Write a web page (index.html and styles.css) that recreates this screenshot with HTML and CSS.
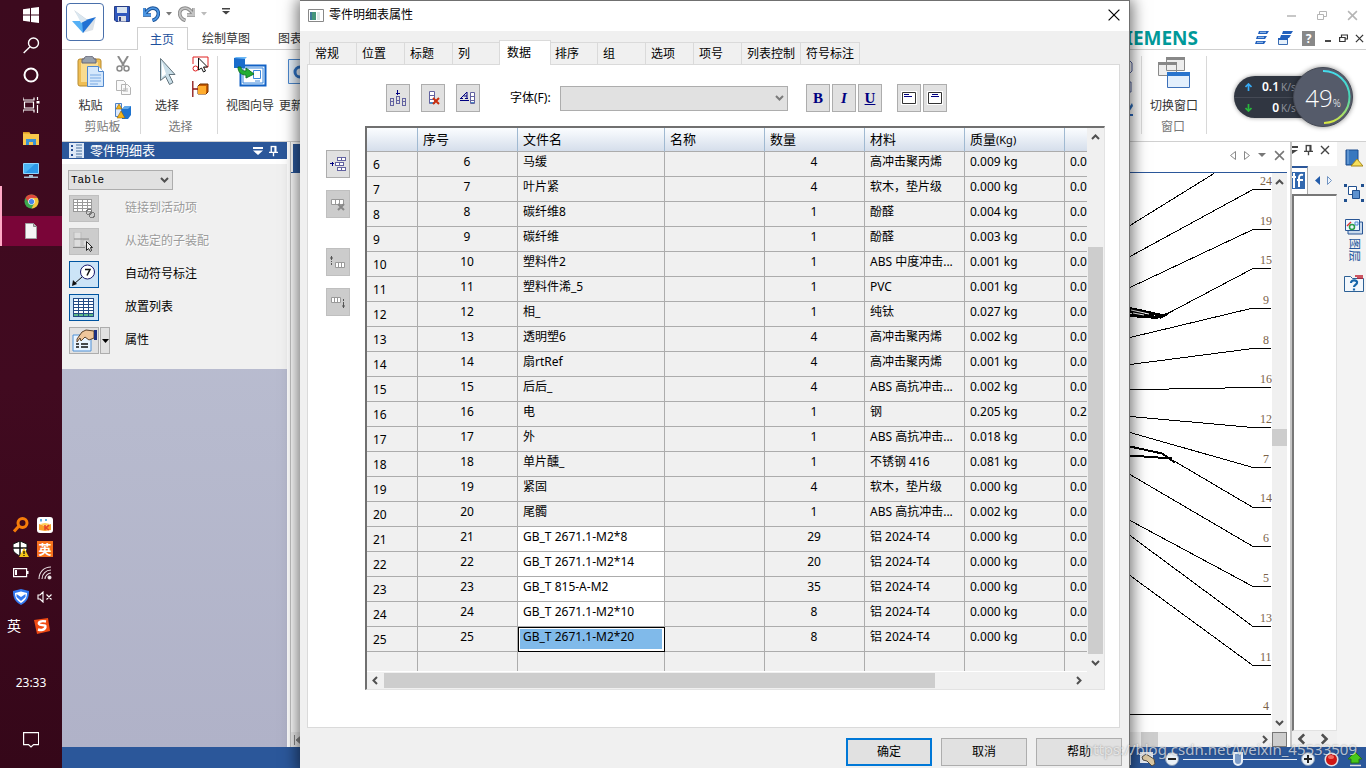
FILE: index.html
```html
<!DOCTYPE html>
<html lang="zh-CN">
<head>
<meta charset="utf-8">
<title>零件明细表属性</title>
<link rel="stylesheet" href="styles.css">
</head>
<body>
<svg class="defs" width="0" height="0" aria-hidden="true">
  <symbol id="up" viewBox="0 0 9 6"><path d="M1 5 4.500 1.500 8 5" fill="none" stroke="#505050" stroke-width="2"/></symbol>
  <symbol id="down" viewBox="0 0 9 6"><path d="M1 1 4.500 4.500 8 1" fill="none" stroke="#505050" stroke-width="2"/></symbol>
  <symbol id="left" viewBox="0 0 6 9"><path d="M5 1 1.500 4.500 5 8" fill="none" stroke="#505050" stroke-width="2"/></symbol>
  <symbol id="right" viewBox="0 0 6 9"><path d="M1 1 4.500 4.500 1 8" fill="none" stroke="#505050" stroke-width="2"/></symbol>
  <symbol id="pin" viewBox="0 0 10 12"><path d="M2.500 7V1h5v6M0 7.500h10M5 8v4" fill="none" stroke="currentColor" stroke-width="1.500"/><path d="M6 1h2v6H6z" fill="currentColor"/></symbol>
  <symbol id="close" viewBox="0 0 10 10"><path d="m1 1 8 8M9 1 1 9" fill="none" stroke="currentColor" stroke-width="1.400"/></symbol>
</svg>

<nav class="taskbar">
  <div class="launch">
    <button class="task" aria-label="开始"><svg width="16" height="16" viewBox="0 0 16 16" fill="#fff"><path d="M0 2.300 7 1.300V7.600H0zM8 1.100 16 0v7.600H8zM0 8.400h7v6.300L0 13.700zM8 8.400h8V16l-8-1.100z"/></svg></button>
    <button class="task" aria-label="搜索"><svg width="17" height="17" viewBox="0 0 17 17" fill="none" stroke="#fff" stroke-width="1.400"><circle cx="10.500" cy="6" r="5"/><path d="M7 9.700.7 16"/></svg></button>
    <button class="task" aria-label="Cortana"><svg width="16" height="16" viewBox="0 0 16 16" fill="none" stroke="#fff" stroke-width="2"><circle cx="8" cy="8" r="6.500"/></svg></button>
    <button class="task" aria-label="任务视图"><svg width="17" height="16" viewBox="0 0 17 16" fill="none" stroke="#fff" stroke-width="1.200"><path d="M0 .5V3h11V.5M0 15.500V13h11v2.500M1.500 5h9v6h-9zM14.500 0v3M14.500 8v8"/><path d="M13.500 4h3v2.500h-3z" fill="#fff" stroke="none"/></svg></button>
    <button class="task pinned" aria-label="文件资源管理器"><svg width="17" height="15" viewBox="0 0 17 15"><path d="M0 1h6l1.500 2H16v11H0z" fill="#f8c84c"/><path d="M0 1h6l1 1.500H0z" fill="#dd9b22"/><path d="M3 14V8h10v6h-3v-3H6v3z" fill="#3a93d5"/></svg></button>
    <button class="task pinned" aria-label="此电脑"><svg width="17" height="16" viewBox="0 0 17 16"><path d="M.5.500h15v10H.5z" fill="#4bb5f5" stroke="#8ed5ff"/><path d="M2 10 12 1h3v9z" fill="#2d98e8"/><path d="M6 12h4v1.500h5V15H1v-1.500h5z" fill="#a8bed0"/></svg></button>
    <button class="task running" aria-label="Chrome"><svg width="15" height="15" viewBox="0 0 16 16"><circle cx="8" cy="8" r="7.500" fill="#3da74e"/><path d="M1.500 4.200A7.500 7.500 0 0 1 14.500 4.300H8L5 9z" fill="#df4a3d"/><path d="M14.500 4.300A7.500 7.500 0 0 1 8 15.500L11 9.500 9 4.300z" fill="#f5c43b"/><circle cx="8" cy="8" r="3.500" fill="#fff"/><circle cx="8" cy="8" r="2.800" fill="#4886eb"/></svg></button>
    <button class="task running active" aria-label="文档"><svg width="12" height="16" viewBox="0 0 12 16"><path d="M.5.500h8l3 3v12H.5z" fill="#f5f5f5" stroke="#a0a0a0"/><path d="M8.500.500v3h3" fill="#bbb" stroke="#888"/></svg></button>
  </div>
  <div class="tray">
    <svg width="16" height="16" viewBox="0 0 16 16" fill="none" stroke="#f57c0a"><circle cx="9.500" cy="6" r="4.500" stroke-width="3"/><path d="m6 9-5 5.500" stroke-width="3"/></svg>
    <svg width="16" height="16" viewBox="0 0 16 16"><rect width="16" height="16" rx="3" fill="#fff"/><path d="m2 7 6 2 6-2v6l-6 1-6-1z" fill="#f8a02a"/><path d="M3 7l5-1 5 1-5 2z" fill="#ffcf57"/><path d="M8 8v5M12 8 9 11l3 2" stroke="#e6432c" stroke-width="1.500" fill="none"/><path d="M4 4.500V2M8 3h2" stroke="#2c97d8" stroke-width="1.500"/></svg>
    <svg width="16" height="16" viewBox="0 0 16 16"><path d="M7 0 14 3v5c0 3-3 5-7 7C3 13 0 11 0 8V3z" fill="#fff" stroke="#111"/><path d="M7 0v15M0 7h14" stroke="#111" stroke-width="1.500"/><path d="m11 7 5 9H6z" fill="#f5c518"/><path d="M11 10v3M11 14v1" stroke="#111" stroke-width="1.300"/></svg>
    <span class="ime">英</span>
    <svg width="16" height="10" viewBox="0 0 16 10"><path d="M.6.600h13v8H.6z" fill="none" stroke="#fff" stroke-width="1.200"/><path d="M2 2h2v5H2zM14 3h1.500v3H14z" fill="#fff"/></svg>
    <svg width="14" height="14" viewBox="0 0 14 14" fill="none" stroke="#e9dfe3" stroke-width="1.100"><path d="M1 13C1 6 6 1 13 1M4 13c0-5 4-9 9-9M7 13c0-3 3-6 6-6"/><circle cx="11.500" cy="11.500" r="1.500" fill="#fff"/></svg>
    <svg width="16" height="16" viewBox="0 0 16 16"><path d="M8 0 16 2c0 7-2 11-8 14C2 13 0 9 0 2z" fill="#3278ef"/><path d="M8 2.500 14 4c0 5-2 7.500-6 10-4-2.500-6-5-6-10z" fill="#fff"/><path d="m3.500 5 4.500 3 4.500-3v3L8 12 3.500 8z" fill="#3278ef"/></svg>
    <svg width="16" height="12" viewBox="0 0 16 12" fill="none" stroke="#fff" stroke-width="1.100"><path d="M1 4h2l3-3v10L3 8H1zM9.500 3.500l5 5M14.500 3.500l-5 5"/></svg>
    <span class="lang">英</span>
    <svg class="sogou" width="16" height="16" viewBox="0 0 16 16"><path d="M0 2 14 0l2 13-13 3z" fill="#f04b14"/><path d="M12 3.500C7 2.500 4 4 5 6s7 0 6.500 3C11 12 7 12.500 4 11.500" fill="none" stroke="#fff" stroke-width="2.400"/></svg>
  </div>
  <time class="clock">23:33</time>
  <button class="notify" aria-label="通知"><svg width="16" height="16" viewBox="0 0 16 16"><path d="M.6.600h15v12h-5L8 15l-2.500-2.400H.6z" fill="none" stroke="#fff" stroke-width="1.200"/></svg></button>
</nav>

<div class="app">
  <header class="top">
    <div class="logo-cell">
      <button class="logo" aria-label="应用程序"><svg width="26" height="26" viewBox="0 0 26 26"><path d="M2 1 17 12 14 20z" fill="#c9d2da"/><path d="M24 8 10 24 21 21z" fill="#dce2e8"/><path d="M0 12h12l-1 12z" fill="#55b0f5"/><path d="M10 12 24 8 11 24z" fill="#2171d3"/><path d="m3 2 12 9-6 3z" fill="#dbe7f0"/></svg></button>
    </div>
    <div class="top-main">
      <div class="quick">
        <button aria-label="保存"><svg width="16" height="16" viewBox="0 0 16 16"><path d="M.5.500h15v15H2L.5 14z" fill="#2f57bd" stroke="#273d86"/><path d="M3 1h10v6H3z" fill="#d9e4ef"/><path d="M4 10h8v5.500H4z" fill="#d9dce4"/><path d="M5 11h2v4H5z" fill="#31417e"/></svg></button>
        <button class="after-save" aria-label="撤消"><svg width="17" height="16" viewBox="0 0 17 16"><path d="M1 2v7h7M1.500 8.500C5 3 9 1.500 12 2.500c4 1.500 4 6 2 9-1 1.500-3 2.500-4.500 3" fill="none" stroke="#1b5296" stroke-width="3.600"/><path d="M1 2v7h7M1.500 8.500C5 3 9 1.500 12 2.500c4 1.500 4 6 2 9-1 1.500-3 2.500-4.500 3" fill="none" stroke="#4d97e4" stroke-width="1.800"/></svg></button>
        <svg class="drop" width="6" height="4" viewBox="0 0 6 4"><path d="M0 0h6L3 3.500z" fill="#777"/></svg>
        <button aria-label="重做"><svg width="17" height="16" viewBox="0 0 17 16"><path d="M16 2v7H9M15.500 8.500C12 3 8 1.500 5 2.500c-4 1.500-4 6-2 9 1 1.500 3 2.500 4.500 3" fill="none" stroke="#8a8a8a" stroke-width="3.600"/><path d="M16 2v7H9M15.500 8.500C12 3 8 1.500 5 2.500c-4 1.500-4 6-2 9 1 1.500 3 2.500 4.500 3" fill="none" stroke="#c4c4c4" stroke-width="1.800"/></svg></button>
        <svg class="drop" width="6" height="4" viewBox="0 0 6 4"><path d="M0 0h6L3 3.500z" fill="#bbb"/></svg>
        <svg class="custom" width="8" height="7" viewBox="0 0 8 7"><path d="M0 0h8v1.500H0zM0 3h8L4 6.500z" fill="#444"/></svg>
        <div class="win-controls">
          <svg width="10" height="10" viewBox="0 0 10 10"><path d="M0 6h9" stroke="#b5b5b5" stroke-width="1.500"/></svg>
          <svg width="10" height="11" viewBox="0 0 10 11" fill="none" stroke="#b5b5b5"><path d="M2.500 4V1.500h7v5H7M.5 4.500h6v5h-6z"/></svg>
          <svg width="11" height="11" viewBox="0 0 10 10" color="#b5b5b5"><use href="#close"/></svg>
        </div>
      </div>
      <div class="tabs-row">
        <a class="rtab current" href="#home">主页</a>
        <a class="rtab" href="#sketch">绘制草图</a>
        <a class="rtab" href="#chart">图表</a>
        <div class="brand-row">
          <span class="brand">SIEMENS</span>
          <svg width="14" height="14" viewBox="0 0 14 14"><path d="M4 0h10l-2 3H3zM2 5h10l-2 3H1zM1 10h10l-2 3H0z" fill="#2361bd"/><path d="M5 1.300h6M3 6.300h6M2 11.300h6" stroke="#a8cbf0"/></svg>
          <svg width="15" height="15" viewBox="0 0 15 15"><path d="M5 0h10l-2 3H4zM3 4h10l-2 3H2z" fill="#2361bd"/><path d="M.5 7.500h9v6h-9z" fill="#e5f0fb" stroke="#3b6db3"/><path d="M0 7h10v2H0z" fill="#2361bd"/></svg>
          <span class="help">?</span>
          <svg class="mdi" width="8" height="10" viewBox="0 0 8 10"><path d="M1 8h6" stroke="#333" stroke-width="1.800"/></svg>
          <svg class="mdi" width="9" height="9" viewBox="0 0 9 9" fill="none" stroke="#333" stroke-width="1.200"><path d="M2.500 3V1h6v4H6.500M.6 3.500h5.500v4H.6z"/></svg>
          <svg class="mdi" width="9" height="9" viewBox="0 0 10 10" color="#333"><use href="#close"/></svg>
        </div>
      </div>
    </div>
  </header>

  <section class="ribbon">
    <div class="group clip">
      <div class="tools">
        <button class="big"><svg width="28" height="32" viewBox="0 0 28 32"><rect x="1" y="3" width="23" height="27" rx="2" fill="#efbe55" stroke="#b78a2e"/><path d="M4 6h17v20H4z" fill="#f9dc91"/><path d="M7 3c0-2 2-3 5-3s5 1 5 3h2v4H5V3z" fill="#98a1ad" stroke="#667"/><path d="M10.500 10.500h11l5 5v15h-16z" fill="#d5e8fc" stroke="#5188cd"/><path d="M21.500 10.500v5h5" fill="#fff" stroke="#5188cd"/><path d="M13 19h11M13 22h11M13 25h11M13 28h8" stroke="#78a9e3"/></svg><span>粘贴</span></button>
        <div class="mini">
          <svg width="14" height="16" viewBox="0 0 14 16" fill="none" stroke="#8b8b8b"><path d="m2 0 6 10M12 0 6 10" stroke-width="2"/><circle cx="3.500" cy="12.500" r="2.500" stroke-width="1.500"/><circle cx="10.500" cy="12.500" r="2.500" stroke-width="1.500"/></svg>
          <svg width="15" height="15" viewBox="0 0 15 15" fill="#fafafa" stroke="#b4b4b4"><path d="M.5.500h7l2 2v8h-9zM5.500 4.500h6l3 3v7h-9z"/><path d="M7 9h5M7 11h5"/></svg>
          <svg width="17" height="16" viewBox="0 0 17 16"><path d="M.5.500h6v13h-6z" fill="#dfeafa" stroke="#4b81c8"/><path d="m7 6 3-3h6v9l-3 4H7z" fill="#1e73cf"/><path d="m7 6 3-3h6l-3 3z" fill="#62a9eb"/><path d="m4 1 3 5H1zM6 8l4 7H2z" fill="#f3b51b" stroke="#805400" stroke-width=".5"/></svg>
        </div>
      </div>
      <h2>剪贴板</h2>
    </div>
    <div class="group select-group">
      <div class="tools">
        <button class="big"><svg width="28" height="32" viewBox="0 0 28 32"><path d="M7.500 2.500v22l5-4 4 8 3.500-2-4-8h6z" fill="#c9dee8" stroke="#63747d"/><path d="M9 6v15l4-3z" fill="#fff"/></svg><span>选择</span></button>
        <div class="mini two">
          <svg width="17" height="17" viewBox="0 0 17 17"><path d="M1 8V1h15v10h-4" fill="none" stroke="#e02020"/><circle cx="3.500" cy="12.500" r="2.500" fill="none" stroke="#e02020"/><path d="M6.500 2v12l3-2 2 4 2-1-2-4h4z" fill="#fff" stroke="#111"/></svg>
          <svg width="17" height="16" viewBox="0 0 17 16"><path d="M.8 0v16M1 8h6" stroke="#8b1313" stroke-width="1.300"/><path d="m6 5 2-2h8v8l-2 2H6z" fill="#c95d00" stroke="#713000"/><path d="M6 5h8v8H6z" fill="#ffad2e"/></svg>
        </div>
      </div>
      <h2>选择</h2>
    </div>
    <div class="group views">
      <div class="tools">
        <button class="big"><svg width="34" height="32" viewBox="0 0 34 32"><path d="M7.500 9.500h25v20h-25z" fill="#e7f4ff" stroke="#1262c6" stroke-width="2"/><path d="M10 12h20v15H10z" fill="#fff" stroke="#3c87dc"/><path d="M20.500 14.500h7v8h-7zM22 25h5" fill="none" stroke="#3c87dc"/><path d="M1 2h11v10H1z" fill="#1a6dcc"/><path d="m1 2 2-1h11l-2 2z" fill="#6cb8f6"/><path d="M5 11c0 5 3 8 8 8v3l8-4-8-6v3c-4 0-5-2-5-4z" fill="#23ae31" stroke="#15752a"/></svg><span>视图向导</span></button>
        <button class="big update"><svg width="34" height="32" viewBox="0 0 34 32"><path d="M1.500 3.500h31v24h-31z" fill="#e7f2fd" stroke="#4b88ce"/><circle cx="13" cy="16" r="5" fill="none" stroke="#2d72c5" stroke-width="3"/></svg><span>更新视图</span></button>
      </div>
    </div>
    <div class="group window-group">
      <div class="tools">
        <div class="mini partial"><svg width="10" height="70" viewBox="0 0 10 70"><path d="M1 4h5l3 3v8l-3 3H1zM1 26h7v10H1z" fill="none" stroke="#4f5e9b"/><path d="M9 47 3 56l1 3 6-9z" fill="#2c6dbb"/><path d="M0 59h10" stroke="#2868bf" stroke-width="2"/></svg></div>
        <button class="big"><svg width="34" height="32" viewBox="0 0 34 32"><path d="M9.500 1.500h18v13h-18zM1.500 6.500h18v13h-18z" fill="#eee" stroke="#8a8a8a"/><path d="M9 1h19v3H9zM1 6h19v3H1z" fill="#888"/><path d="M10.500 16.500h22v15h-22z" fill="#e3effc" stroke="#3c70b9"/><path d="M10 16h23v4H10z" fill="#2974cd"/></svg><span>切换窗口</span></button>
      </div>
      <h2>窗口</h2>
    </div>
  </section>

  <main class="work">
    <aside class="side">
      <header class="side-head">
        <svg width="15" height="15" viewBox="0 0 15 15"><path d="M0 0h15v15H0z" fill="#dfe9f7"/><path d="M7 2h6M7 5h6M7 8h6M7 11h6M7 14h6" stroke="#47709f"/><path d="M2 2h2v2H2zM2 6h2v2H2zM2 11h2v2H2z" fill="#274f93"/></svg>
        <h1>零件明细表</h1>
        <svg class="menu" width="10" height="8" viewBox="0 0 10 8"><path d="M0 0h10v2H0zM0 3.500h10L5 8z" fill="#fff"/></svg>
        <svg width="9" height="12" viewBox="0 0 10 12" color="#fff"><use href="#pin"/></svg>
      </header>
      <div class="side-body">
        <label class="combo style-combo"><select aria-label="样式"><option>Table</option></select><svg width="9" height="6"><use href="#down"/></svg></label>
        <div class="option off"><button disabled aria-labelledby="o1"><svg width="22" height="20" viewBox="0 0 22 20" shape-rendering="crispEdges"><path d="M.5.500h18v12H.5zM0 3.500h19M0 6.500h19M0 9.500h19M4.500 0v12M9.500 0v12M14.500 0v12" fill="#fff" stroke="#999"/><circle cx="16" cy="13" r="2.500" fill="none" stroke="#777"/><circle cx="19" cy="16" r="2.500" fill="none" stroke="#777"/></svg></button><span id="o1">链接到活动项</span></div>
        <div class="option off"><button disabled aria-labelledby="o2"><svg width="22" height="20" viewBox="0 0 22 20"><path d="M1 0h7v15H1zM10 8h6v6h-6z" fill="#ddd" stroke="#bbb"/><path d="M0 15.500h12M1 7h15" stroke="#888"/><path d="M13.500 9.500v9l2-2 2 3 1-1-1-3h2z" fill="#eee" stroke="#222"/></svg></button><span id="o2">从选定的子装配</span></div>
        <div class="option on"><button aria-labelledby="o3"><svg width="24" height="22" viewBox="0 0 24 22"><circle cx="15.500" cy="8" r="7" fill="#fff" stroke="#16166b"/><path d="M13 5.500h5l-3 6" fill="none" stroke="#111" stroke-width="1.500"/><path d="m10 13-8 7" stroke="#111"/><path d="m0 22 1-6 4 4z" fill="#111"/></svg></button><span id="o3">自动符号标注</span></div>
        <div class="option on"><button aria-labelledby="o4"><svg width="22" height="20" viewBox="0 0 22 20" shape-rendering="crispEdges"><path d="M1 1h20v18H1z" fill="#fff"/><path d="M1 16h20v3H1z" fill="#5cb987"/><path d="M.5.500h20v18H.5zM.5 3.500h20M.5 6.500h20M.5 9.500h20M.5 12.500h20M.5 15.500h20M5.500.500v18M10.500.500v18M15.500.500v18" fill="none" stroke="#224b85"/></svg></button><span id="o4">放置列表</span></div>
        <div class="option"><button aria-labelledby="o5"><svg width="25" height="23" viewBox="0 0 25 23"><path d="M1 6h18v16H1z" fill="#e9f4ff" stroke="#4e91d6"/><path d="M4 15h3M4 18h3M9 15h7M9 18h7" stroke="#111" stroke-width="1.500"/><path d="m5 10 5-7 4-2 8 1v7l-5 2-4-3-4 4-1-3-3 4z" fill="#efc69b" stroke="#5c432c"/><path d="M22 1h3v10h-3z" fill="#1b2f81"/></svg></button><button class="split" aria-label="更多属性"><svg width="7" height="4"><path d="M0 0h7L3.500 4z"/></svg></button><span id="o5">属性</span></div>
      </div>
    </aside>

    <section class="document">
      <div class="doc-tabs"><span class="doc-tab"></span>
        <div class="doc-nav"><svg width="6" height="9"><path d="M5.500.500v8L.5 4.500z" fill="#fff" stroke="#888"/></svg><svg width="6" height="9"><path d="M.5.500v8l5-4z" fill="#fff" stroke="#888"/></svg><svg width="8" height="5"><path d="M0 0h8L4 4z" fill="#777"/></svg><svg width="11" height="11" viewBox="0 0 10 10" color="#777"><use href="#close"/></svg></div>
      </div>
      <div class="canvas-row">
        <svg class="drawing" viewBox="1130 173 142 559" preserveAspectRatio="xMaxYMin meet">
          <g fill="none" stroke="#000" shape-rendering="crispEdges" transform="translate(0 .5)">
            <path d="m1130 225 84-52M1130 256l123-67h18M1130 287l123-58h18M1162 316l91-48h18M1130 337l121-29h20M1130 364l123-16h18M1130 389h39M1169 388h56M1225 387h46M1130 416l123 11h18M1130 432l123 35h18M1175 461l78 46h18M1130 474l123 72h18M1130 520l123 66h18M1130 535l123 91h18M1130 575l123 90h18M1130 714h141"/>
            <path stroke-width="3" d="m1130 308 32 7-6 2-26-6M1130 315l28 2M1160 317l8-4"/>
            <path stroke-width="2" d="m1130 446 32 7 13 9M1130 455l42 3"/>
          </g>
          <path d="m1131 310 18 4M1133 313l11 2" stroke="#fff"/>
          <g class="marks">
            <text x="1260" y="185">24</text><text x="1260" y="225">19</text><text x="1260" y="264">15</text><text x="1263" y="304">9</text><text x="1263" y="344">8</text><text x="1260" y="383">16</text><text x="1260" y="423">12</text><text x="1263" y="463">7</text><text x="1260" y="502">14</text><text x="1263" y="542">6</text><text x="1263" y="582">5</text><text x="1260" y="622">13</text><text x="1260" y="661">11</text><text x="1263" y="710">4</text>
          </g>
        </svg>
        <div class="doc-vscroll"><svg width="9" height="6"><use href="#up"/></svg><i></i><svg width="9" height="6"><use href="#down"/></svg></div>
      </div>
      <div class="doc-hscroll"><svg class="first" width="8" height="10" viewBox="0 0 8 10"><path d="M.5 0v10M8 0v10L2 5z" fill="#888" stroke="#888"/></svg><i></i><svg width="6" height="9"><use href="#right"/></svg><b></b></div>
    </section>

    <aside class="library">
      <div class="lib-head"><svg width="8" height="8" viewBox="0 0 8 8"><path d="M0 0h6v2H0zM0 4h6L0 8z" fill="#444"/></svg><svg width="9" height="12" viewBox="0 0 10 12" color="#444"><use href="#pin"/></svg><svg width="10" height="10" color="#444"><use href="#close"/></svg></div>
      <div class="lib-tabs"><span><svg width="13" height="17" viewBox="0 0 13 17"><path d="M0 0h13v17H0z" fill="#3268ae"/><path d="M2 1v15M0 5h4M11 3c-3-1-4 1-4 3v9M5 8h6" fill="none" stroke="#fff" stroke-width="2"/></svg></span><svg width="5" height="9"><path d="M5 0v9L0 4.500z" fill="#235caa"/></svg><svg width="5" height="9"><path d="M.5.500v8l4-4z" fill="#eef4fc" stroke="#7194c2"/></svg></div>
      <div class="lib-page"></div>
      <div class="lib-scroll"><svg width="9" height="12" viewBox="0 0 6 9"><use href="#left"/></svg><svg width="9" height="12" viewBox="0 0 6 9"><use href="#right"/></svg></div>
    </aside>
    <aside class="strip">
      <svg width="18" height="18" viewBox="0 0 18 18"><path d="M1 1h12v15H1z" fill="#3978bf" stroke="#1d4c8e"/><path d="M3 1v14" stroke="#84b1e2"/><path d="m12 10 6 7H6z" fill="#f7df5c" stroke="#a58718"/></svg>
      <svg width="20" height="18" viewBox="0 0 20 18"><path d="M0 0h3v3H0zM17 0h3v3h-3zM0 15h3v3H0zM17 15h3v3h-3z" fill="#20508f"/><path d="M4.500 2.500h8v8h-8z" fill="#fff" stroke="#20508f"/><path d="M8.500 6.500h7v8h-7z" fill="#5c91cf" stroke="#20508f"/></svg>
      <svg width="18" height="16" viewBox="0 0 18 16"><path d="M3 3h14.500v12H3z" fill="#c9daed" stroke="#285594"/><path d="M.5.500h14v11H.5z" fill="#edf6ff" stroke="#285594"/><path d="m2 7 4-4" fill="none" stroke="#d33" stroke-width="1.500"/><path d="M10 3h3v3h-3z" fill="none" stroke="#4c8ad0"/><circle cx="7" cy="8" r="2.500" fill="none" stroke="#2a9d46" stroke-width="1.500"/></svg>
      <span class="rotated">图层</span>
      <svg width="20" height="18" viewBox="0 0 20 18"><path d="M.5 16.500V1.500h6l2 2h11v13z" fill="#f2f7fc" stroke="#2c6095"/><path d="M11 1h8M13 3h6" stroke="#c02030" stroke-width="1.500"/><path d="M7 8c0-4 7-3 6 0-.500 2-3 2-3 4M10 13.500v2" fill="none" stroke="#1665a9" stroke-width="2.200"/></svg>
    </aside>
  </main>

  <footer class="status">
    <svg width="12" height="12" viewBox="0 0 12 12"><path d="M0 0h12v12H0z" fill="#e9effb"/><path d="m2 2 8 8M10 2l-8 8" stroke="#214a9a" stroke-width="1.500" stroke-dasharray="3 2"/></svg>
    <svg width="16" height="14" viewBox="0 0 16 14"><path d="M0 0h13v11H0z" fill="#e7ecf4"/><path d="m2 5 4-3 8 5 1 5-3 2-5-5-4-1z" fill="#d9c6a1" stroke="#514a40"/></svg>
    <button class="round" aria-label="缩小"><svg width="14" height="14" viewBox="0 0 14 14"><circle cx="7" cy="7" r="6.500" fill="#e9f0f6" stroke="#8297b2"/><path d="M3 7h8" stroke="#222" stroke-width="2"/></svg></button>
    <input class="zoom" type="range" min="0" max="100" value="48" aria-label="缩放">
    <button class="round" aria-label="放大"><svg width="14" height="14" viewBox="0 0 14 14"><circle cx="7" cy="7" r="6.500" fill="#e9f0f6" stroke="#8297b2"/><path d="M3 7h8M7 3v8" stroke="#222" stroke-width="2"/></svg></button>
    <svg width="15" height="15" viewBox="0 0 15 15"><circle cx="7.500" cy="7.500" r="7" fill="#e1e3e8"/><circle cx="7.500" cy="7.500" r="5.500" fill="#cf1715"/><ellipse cx="7" cy="5" rx="3" ry="2" fill="#f26a5f"/></svg>
    <svg width="14" height="15" viewBox="0 0 14 15"><path d="m7 0 7 7h-3v4H3V7H0z" fill="#46c81a" stroke="#297610"/><path d="M2 13.500h11" stroke="#ddd" stroke-width="1.500"/></svg>
  </footer>
</div>

<div class="meter">
  <div class="rates"><p><svg width="7" height="8"><path d="M3.500 8V1M.5 4l3-3 3 3" fill="none" stroke="#37aaf5" stroke-width="1.700"/></svg><b>0.1</b><small>K/s</small></p><p><svg width="7" height="8"><path d="M3.500 0v7M.5 4l3 3 3-3" fill="none" stroke="#28b83d" stroke-width="1.700"/></svg><b>0</b><small>K/s</small></p></div>
  <div class="dial"><svg width="60" height="60" viewBox="0 0 60 60"><defs><linearGradient id="arc" x2="0" y2="1"><stop stop-color="#45dcec"/><stop offset=".5" stop-color="#48d6b4"/><stop offset="1" stop-color="#d7e642"/></linearGradient></defs><path d="M30 4a26 26 0 0 1 1 52" fill="none" stroke="url(#arc)" stroke-width="2"/></svg><span>49<small>%</small></span></div>
</div>

<section class="dialog" role="dialog" aria-labelledby="dlg-title">
  <header class="dlg-head">
    <svg width="16" height="13" viewBox="0 0 16 13"><path d="M.5.500h15v12H.5z" fill="#fff" stroke="#888"/><path d="M2 3h6v8H2z" fill="#43957a"/><path d="M2 3h2v8H2z" fill="#3c7898"/><path d="M9 3h3v8H9z" fill="#dce7e7"/></svg>
    <h1 id="dlg-title">零件明细表属性</h1>
    <button class="dlg-close" aria-label="关闭"><svg width="12" height="12" viewBox="0 0 10 10"><path d="m.5.500 9 9M9.500.500l-9 9" stroke="#000"/></svg></button>
  </header>
  <div class="dlg-tabs" role="tablist">
    <button role="tab">常规</button><button role="tab">位置</button><button role="tab">标题</button><button role="tab">列</button><button role="tab" class="selected" aria-selected="true">数据</button><button role="tab">排序</button><button role="tab">组</button><button role="tab">选项</button><button role="tab">项号</button><button role="tab" class="wide">列表控制</button><button role="tab" class="wide">符号标注</button>
  </div>
  <div class="pane">
    <div class="toolbar">
      <button class="tool" aria-label="插入列"><svg width="16" height="16" viewBox="0 0 16 16" fill="none" stroke="#6262a0" shape-rendering="crispEdges"><path d="M7.500 0v5M5.500 3.500h4" stroke="#000080"/><path d="M.5 8.500h3v7h-3zM6.500 6.500h3v7h-3zM12.500 8.500h3v7h-3zM0 11.500h4M6 10.500h4M12 11.500h4"/></svg></button>
      <button class="tool" aria-label="删除列"><svg width="14" height="16" viewBox="0 0 14 16"><path d="M3.500 1.500h5v12h-5zM3 5.500h6M3 9.500h6" fill="#fff" stroke="#6262a0"/><path d="M4 12h5v2H4z" fill="#4e8ac5"/><path d="m7 8 6 6M13 8l-6 6" stroke="#cb2f0d" stroke-width="2"/></svg></button>
      <button class="tool" aria-label="文本格式"><svg width="16" height="16" viewBox="0 0 16 16"><path d="m1 8 6-6v6M3.500 6H7M0 8.500h3M5 8.500h3M0 10.500h9" fill="none" stroke="#000080"/><path d="M10.500 2.500h4v11h-4zM10 6.500h5M10 10.500h5" fill="#fff" stroke="#6262a0"/><path d="M11 12h3v1h-3z" fill="#4e8ac5"/></svg></button>
      <label class="font-label" for="font">字体(F):</label>
      <div class="combo font-combo"><select id="font"><option></option></select><svg width="9" height="6"><use href="#down"/></svg></div>
      <div class="format"><button class="tool letter">B</button><button class="tool letter italic">I</button><button class="tool letter under">U</button></div>
      <div class="format"><button class="tool" aria-label="左对齐"><svg width="16" height="14" viewBox="0 0 16 14"><path d="M0 0h16v14H0z" fill="#fff"/><path d="M1.500 1.500h13v11h-13z" fill="none" stroke="#333"/><path d="M3 3.500h5M3 5.500h8" stroke="#000080"/></svg></button><button class="tool" aria-label="居中"><svg width="16" height="14" viewBox="0 0 16 14"><path d="M0 0h16v14H0z" fill="#fff"/><path d="M1.500 1.500h13v11h-13z" fill="none" stroke="#333"/><path d="M5 3.500h6M4 5.500h8" stroke="#000080"/></svg></button></div>
    </div>
    <div class="editor">
      <div class="row-tools">
        <button class="tool" aria-label="插入行"><svg width="16" height="16" viewBox="0 0 16 16" fill="#fff" stroke="#6262a0" shape-rendering="crispEdges"><path d="M0 7.500h4M2.500 5.500v4" stroke="#000080"/><path d="M7.500 1.500h8v3h-8zM5.500 6.500h8v3h-8zM7.500 11.500h8v3h-8zM11.500 1v4M9.500 6v4M11.500 11v4"/></svg></button>
        <button class="tool" disabled aria-label="删除行"><svg width="16" height="16" viewBox="0 0 16 16"><path d="M1.500 3.500h12v5h-12zM5.500 3v6M9.500 3v6" fill="#fff" stroke="#999"/><path d="m8 8 6 6M14 8l-6 6" stroke="#888" stroke-width="2"/></svg></button>
        <button class="tool second" disabled aria-label="上移"><svg width="16" height="16" viewBox="0 0 16 16"><path d="M1.500 2v6M0 4h3M1.500 9v2" stroke="#555" stroke-dasharray="4 1"/><path d="M5.500 8.500h9v5h-9zM8.500 8v6M11.500 8v6" fill="#fff" stroke="#999"/></svg></button>
        <button class="tool" disabled aria-label="下移"><svg width="16" height="16" viewBox="0 0 16 16"><path d="M1.500 3.500h9v5h-9zM4.500 3v6M7.500 3v6" fill="#fff" stroke="#999"/><path d="M13.500 5v2M13.500 8v6M12 12h3" stroke="#555"/></svg></button>
      </div>
      <div class="frame">
        <div class="view">
        <table>
          <colgroup><col class="c0"><col class="c1"><col class="c2"><col class="c1"><col class="c1"><col class="c1"><col class="c1"><col class="c1"></colgroup>
          <thead><tr><th></th><th>序号</th><th>文件名</th><th>名称</th><th>数量</th><th>材料</th><th>质量<small>(Kg)</small></th><th></th></tr></thead>
          <tbody>
            <tr><th>6</th><td>6</td><td>马缓</td><td></td><td>4</td><td>高冲击聚丙烯</td><td>0.009 kg</td><td>0.0</td></tr>
            <tr><th>7</th><td>7</td><td>叶片紧</td><td></td><td>4</td><td>软木，垫片级</td><td>0.000 kg</td><td>0.0</td></tr>
            <tr><th>8</th><td>8</td><td>碳纤维8</td><td></td><td>1</td><td>酚醛</td><td>0.004 kg</td><td>0.0</td></tr>
            <tr><th>9</th><td>9</td><td>碳纤维</td><td></td><td>1</td><td>酚醛</td><td>0.003 kg</td><td>0.0</td></tr>
            <tr><th>10</th><td>10</td><td>塑料件2</td><td></td><td>1</td><td>ABS 中度冲击...</td><td>0.001 kg</td><td>0.0</td></tr>
            <tr><th>11</th><td>11</td><td>塑料件浠_5</td><td></td><td>1</td><td>PVC</td><td>0.001 kg</td><td>0.0</td></tr>
            <tr><th>12</th><td>12</td><td>相_</td><td></td><td>1</td><td>纯钛</td><td>0.027 kg</td><td>0.0</td></tr>
            <tr><th>13</th><td>13</td><td>透明塑6</td><td></td><td>4</td><td>高冲击聚丙烯</td><td>0.002 kg</td><td>0.0</td></tr>
            <tr><th>14</th><td>14</td><td>扇rtRef</td><td></td><td>4</td><td>高冲击聚丙烯</td><td>0.001 kg</td><td>0.0</td></tr>
            <tr><th>15</th><td>15</td><td>后后_</td><td></td><td>4</td><td>ABS 高抗冲击...</td><td>0.002 kg</td><td>0.0</td></tr>
            <tr><th>16</th><td>16</td><td>电</td><td></td><td>1</td><td>钢</td><td>0.205 kg</td><td>0.2</td></tr>
            <tr><th>17</th><td>17</td><td>外</td><td></td><td>1</td><td>ABS 高抗冲击...</td><td>0.018 kg</td><td>0.0</td></tr>
            <tr><th>18</th><td>18</td><td>单片醺_</td><td></td><td>1</td><td>不锈钢 416</td><td>0.081 kg</td><td>0.0</td></tr>
            <tr><th>19</th><td>19</td><td>紧固</td><td></td><td>4</td><td>软木，垫片级</td><td>0.000 kg</td><td>0.0</td></tr>
            <tr><th>20</th><td>20</td><td>尾髑</td><td></td><td>1</td><td>ABS 高抗冲击...</td><td>0.002 kg</td><td>0.0</td></tr>
            <tr><th>21</th><td>21</td><td class="edit">GB_T 2671.1-M2*8</td><td></td><td>29</td><td>铝 2024-T4</td><td>0.000 kg</td><td>0.0</td></tr>
            <tr><th>22</th><td>22</td><td class="edit">GB_T 2671.1-M2*14</td><td></td><td>20</td><td>铝 2024-T4</td><td>0.000 kg</td><td>0.0</td></tr>
            <tr><th>23</th><td>23</td><td class="edit">GB_T 815-A-M2</td><td></td><td>35</td><td>铝 2024-T4</td><td>0.000 kg</td><td>0.0</td></tr>
            <tr><th>24</th><td>24</td><td class="edit">GB_T 2671.1-M2*10</td><td></td><td>8</td><td>铝 2024-T4</td><td>0.000 kg</td><td>0.0</td></tr>
            <tr><th>25</th><td>25</td><td class="edit picked">GB_T 2671.1-M2*20</td><td></td><td>8</td><td>铝 2024-T4</td><td>0.000 kg</td><td>0.0</td></tr>
            <tr><th></th><td></td><td></td><td></td><td></td><td></td><td></td><td></td></tr>
          </tbody>
        </table>
        </div>
        <div class="vscroll"><svg width="9" height="6"><use href="#up"/></svg><i></i><svg width="9" height="6"><use href="#down"/></svg></div>
        <div class="hscroll"><svg width="6" height="9"><use href="#left"/></svg><i></i><svg width="6" height="9"><use href="#right"/></svg></div>
      </div>
    </div>
  </div>
  <footer class="dlg-foot"><button class="default">确定</button><button>取消</button><button>帮助</button></footer>
</section>
<div class="watermark">https://blog.csdn.net/weixin_45533509</div>
</body>
</html>
```
FILE: styles.css
```css
* { box-sizing: border-box; }
body {
  margin: 0; height: 100vh; overflow: hidden; display: flex; position: relative;
  font: 12px/16px "Noto Sans", "Noto Sans CJK SC", sans-serif; color: #000; background: #fff;
}
button, select, input { font: inherit; color: inherit; margin: 0; padding: 0; border: 0; background: none; border-radius: 0; }
h1, h2, p { margin: 0; font: inherit; }
svg { display: block; flex: none; }
.defs { position: absolute; }

/* taskbar */
.taskbar { flex: none; width: 62px; display: flex; flex-direction: column; align-items: center; color: #fff; background: linear-gradient(#3c0a1e, #410a20 50%, #350719); }
.launch { width: 100%; display: flex; flex-direction: column; }
.task { height: 30px; display: grid; place-items: center; border-left: 2px solid transparent; border-right: 2px solid transparent; }
.pinned { margin-top: 3px; }
.running { border-left-color: #ffa9c6; }
.active { background: #7a0538; border-right-color: #7a0538; }
.tray { margin-top: auto; margin-bottom: 32px; padding-left: 4px; display: grid; grid-template-columns: 24px 24px; grid-template-rows: repeat(4, 24px) 34px; place-items: center; }
.ime { width: 16px; height: 16px; background: #f5701d; font-size: 13px; text-align: center; font-weight: bold; }
.lang { font-size: 14px; margin-right: 14px; }
.sogou { margin-right: 6px; }
.clock { font-size: 12px; margin-bottom: 41px; }
.notify { margin-bottom: 20px; }

/* application shell */
.app { flex: 1; min-width: 0; display: flex; flex-direction: column; }
.top { display: flex; height: 50px; }
.logo-cell { width: 75px; padding: 3px 4px; border-bottom: 1px solid #cfcfcf; }
.logo { width: 38px; height: 38px; display: grid; place-items: center; border: 1px solid #4a70ab; border-radius: 4px; background: #fff; }
.top-main { flex: 1; min-width: 0; display: flex; flex-direction: column; margin-left: -24px; }
.quick { height: 27px; display: flex; align-items: center; padding: 0 8px 0 1px; }
.after-save { margin-left: 13px; }
.drop { margin: 0 6px; }
.custom { margin-left: 9px; margin-bottom: 4px; }
.win-controls { margin-left: auto; display: flex; gap: 20px; padding-top: 4px; }
.tabs-row { display: flex; height: 23px; margin-left: 24px; }
.rtab { color: #333; text-decoration: none; border-bottom: 1px solid #cfcfcf; padding: 4px 14px 0; white-space: nowrap; }
.current { color: #1c4f9c; border: 1px solid #cfcfcf; border-bottom: 0; padding: 4px 13px 0 12px; }
.brand-row { flex: 1; border-bottom: 1px solid #cfcfcf; display: flex; justify-content: flex-end; align-items: center; gap: 9px; padding-right: 4px; }
.brand { color: #099; font: bold 19px/20px "Noto Sans", sans-serif; margin-right: 48px; }
.help { width: 13px; height: 15px; background: #888; color: #fff; text-align: center; font-weight: bold; }
.mdi { margin-right: -2px; }

.ribbon { height: 92px; display: flex; border-bottom: 1px solid #d0d0d0; padding-top: 6px; }
.group { display: flex; flex-direction: column; align-items: center; height: 78px; border-right: 1px solid #d8d8d8; color: #333; }
.group h2 { color: #777; margin-top: auto; line-height: 14px; }
.tools { display: flex; }
.big { display: flex; flex-direction: column; align-items: center; gap: 10px; line-height: 16px; white-space: nowrap; }
.clip { width: 79px; }
.clip .tools { gap: 10px; padding-left: 6px; }
.mini { display: flex; flex-direction: column; align-items: center; gap: 8px; }
.clip h2 { padding-left: 3px; }
.select-group { width: 77px; }
.select-group .tools { gap: 11px; padding-left: 4px; }
.select-group h2 { padding-left: 3px; }
.views { border: 0; padding-left: 8px; }
.views .tools { gap: 4px; }
.update { align-items: flex-start; padding-left: 1px; }
.update svg { margin-left: 8px; }
.window-group { margin-left: auto; margin-right: 159px; width: 84px; }
.window-group .tools { gap: 8px; margin-left: -8px; }
.window-group h2 { padding-left: 17px; }
.partial { border-right: 1px solid #ddd; padding-right: 8px; height: 78px; margin-bottom: -20px; }

.work { flex: 1; min-height: 0; display: flex; }
.side { width: 225px; display: flex; flex-direction: column; background: linear-gradient(#bdc1d3, #b0b2c8); }
.side-head { height: 17px; display: flex; align-items: center; gap: 6px; padding: 0 9px 0 7px; background: #2b579a; color: #fff; }
.side-head h1 { font-size: 13px; line-height: 17px; }
.menu { margin-left: auto; }
.side-body { border-top: 5px solid #fff; background: #f0f0f0; padding: 6px 6px 9px; display: flex; flex-direction: column; }
.combo { position: relative; display: block; }
.combo select { appearance: none; width: 100%; height: 100%; background: #e1e1e1; border: 1px solid #adadad; padding: 0 4px; display: block; }
.combo svg { position: absolute; right: 4px; top: calc(50% - 3px); pointer-events: none; }
.style-combo { width: 105px; height: 20px; margin-bottom: 5px; }
.style-combo select { font: 11px "Liberation Mono", monospace; padding: 0 2px; }
.option { height: 33px; display: flex; align-items: flex-start; padding-left: 1px; }
.option button { width: 30px; height: 27px; border: 1px solid #adadad; background: #e1e1e1; display: grid; place-items: center; }
.option span { margin-left: 26px; padding-top: 5px; }
.off { color: #9b9b9b; text-shadow: 1px 1px #fff; }
.off button { background: #ccc; border-color: #bfbfbf; }
.on button { background: #cce4f7; border-color: #0054a0; }
.option .split { width: 10px; margin-left: 1px; }
.split + span { margin-left: 15px; }

.document { flex: 1; min-width: 0; margin: 0 3px 0 3px; border-left: 1px solid #c5c5c5; display: flex; flex-direction: column; }
.doc-tabs { height: 31px; border-bottom: 1px solid #2b579a; display: flex; align-items: flex-end; justify-content: space-between; }
.doc-tab { width: 90px; height: 28px; margin-left: 2px; background: #2b579a; }
.doc-nav { display: flex; align-items: center; gap: 8px; padding: 0 2px 11px; }
.canvas-row { flex: 1; min-height: 0; display: flex; justify-content: flex-end; }
.drawing { flex: 1; min-width: 0; height: 100%; }
.marks text { font: 12px "Liberation Serif", serif; fill: #7b6248; }
.doc-vscroll { width: 15px; background: #f0f0f0; display: flex; flex-direction: column; align-items: center; padding: 6px 0; }
.doc-vscroll i { width: 15px; height: 17px; margin: 244px 0 auto; background: #cdcdcd; }
.doc-hscroll { height: 15px; background: #f0f0f0; display: flex; align-items: center; }
.doc-hscroll i { width: 17px; height: 15px; margin: 0 104px 0 auto; background: #cdcdcd; }
.doc-hscroll .first { margin-left: 3px; }
.doc-hscroll b { width: 15px; height: 15px; margin-left: 4px; background: #cdcdcd; border: 1px solid #777; }

.library { width: 47px; border-left: 2px solid #c5c5c5; display: flex; flex-direction: column; overflow: hidden; }
.lib-head { height: 24px; display: flex; align-items: center; gap: 7px; padding-bottom: 8px; }
.lib-head svg:nth-child(2) { margin-left: -3px; }
.lib-tabs { height: 28px; display: flex; align-items: center; gap: 7px; background: #f3f3f3; }
.lib-tabs span { width: 16px; height: 28px; border-top: 2px solid #2b579a; border-right: 1px solid #aaa; background: #fff; padding-top: 4px; }
.lib-page { flex: 1; border: 1px solid #e2e2e2; border-top: 2px solid #777; border-left: 2px solid #777; }
.lib-scroll { height: 16px; background: #f0f0f0; display: flex; align-items: center; gap: 14px; padding-left: 5px; }
.strip { width: 29px; background: #f3f3f3; display: flex; flex-direction: column; align-items: center; gap: 17px; padding: 7px 0 0 5px; }
.rotated { color: #24569c; writing-mode: vertical-rl; text-orientation: sideways; line-height: 16px; margin: -14px 0 -4px; }

.status { height: 21px; background: #2b579a; display: flex; align-items: center; justify-content: flex-end; gap: 9px; padding: 3px 4px 0 0; }
.zoom { appearance: none; width: 114px; height: 16px; margin: 0 -5px; background: linear-gradient(#e5edf7, #e5edf7) center / 100% 1px no-repeat; }
.zoom::-webkit-slider-thumb { appearance: none; width: 10px; height: 14px; background: #7c9cc8; border: 2px solid #e6eef6; border-radius: 0 0 5px 5px; }

/* network meter */
.meter { position: absolute; right: 13px; top: 67px; display: flex; align-items: center; color: #fff; }
.rates { width: 80px; height: 42px; margin-right: -21px; border-radius: 21px 0 0 21px; background: #303641; box-shadow: 0 0 4px #0006; }
.rates p { height: 21px; display: flex; align-items: center; padding-left: 11px; }
.rates p + p { border-top: 1px solid #454a55; }
.rates b { width: 22px; margin-left: 5px; text-align: right; font-weight: 600; }
.rates small { color: #8c919a; font-size: 10px; margin-left: 2px; }
.dial { position: relative; width: 60px; height: 60px; border-radius: 50%; background: #555b6a; border: 1px solid #444955; box-shadow: 0 0 5px #0007; display: grid; place-items: center; }
.dial svg { position: absolute; inset: -1px; }
.dial span { font: 300 24px "Open Sans", sans-serif; }
.dial small { font-size: 10px; }

/* dialog window */
.dialog { position: absolute; left: 300px; right: 236px; top: 0; bottom: 0; display: flex; flex-direction: column; background: #f0f0f0; border-top: 1px solid #707070; border-right: 1px solid #707070; box-shadow: 0 2px 14px 3px #0008; }
.dlg-head { flex: none; height: 30px; background: #fff; display: flex; align-items: center; gap: 5px; padding: 0 9px 2px 8px; }
.dlg-close { margin-left: auto; }
.dlg-tabs { flex: none; display: flex; align-items: flex-end; height: 33px; padding-left: 9px; }
.dlg-tabs button { width: 48px; height: 22px; text-align: left; padding-left: 5px; border: 1px solid #dadada; border-width: 1px 1px 0 0; white-space: nowrap; }
.dlg-tabs button:first-child { border-left-width: 1px; }
.dlg-tabs .selected { position: relative; width: 52px; height: 25px; margin: 0 -1px -1px -2px; padding-left: 7px; background: #fff; border-width: 1px 1px 0 1px; }
.dlg-tabs .wide { width: 59px; }
.pane { flex: 1; min-height: 0; margin: 0 9px 0 7px; border: 1px solid #dadada; background: #fff; padding: 19px 14px 37px 18px; display: flex; flex-direction: column; }
.toolbar { display: flex; align-items: center; gap: 11px; padding-left: 60px; margin-bottom: 14px; }
.tool { flex: none; width: 24px; height: 28px; border: 1px solid #adadad; background: #e1e1e1; display: grid; place-items: center; }
.tool:disabled { background: #ccc; border-color: #bfbfbf; }
.font-label { margin-left: 19px; width: 39px; white-space: nowrap; }
.font-combo { width: 228px; height: 25px; }
.font-combo svg { opacity: .7; }
.format { display: flex; gap: 2px; }
.format:nth-of-type(2) { margin-left: 7px; }
.format:last-child { margin-left: 4px; }
.letter { font: bold 15px "Liberation Serif", serif; color: #000080; }
.italic { font-style: italic; }
.under { text-decoration: underline; }
.editor { flex: 1; min-height: 0; display: flex; gap: 15px; }
.row-tools { display: flex; flex-direction: column; gap: 12px; padding-top: 24px; }
.second { margin-top: 18px; }
.frame { flex: 1; min-width: 0; display: grid; grid-template: minmax(0, 1fr) 17px / minmax(0, 1fr) 17px; border: 1px solid #e3e3e3; border-top: 2px solid #707070; border-left: 2px solid #707070; background: #f0f0f0; }
.view { overflow: hidden; border-bottom: 1px solid #fff; }
table { table-layout: fixed; border-collapse: separate; border-spacing: 0; width: 798px; }
.c0 { width: 51px; } .c1 { width: 100px; } .c2 { width: 147px; }
th, td { height: 25px; padding: 1px 5px 6px; border: 1px solid #acacac; border-width: 0 1px 1px 0; font-weight: normal; text-align: left; white-space: nowrap; overflow: hidden; line-height: 17px; }
thead th { height: 24px; padding: 3px 5px; font-size: 13px; background: linear-gradient(#fbfdff, #d5deeb); border-right-color: #a0b9d1; }
thead small { font-size: 11px; }
tbody th { padding: 4px 6px 3px; }
td:nth-child(2), td:nth-child(5) { text-align: center; padding-right: 6px; }
.edit { background: #fff; }
.picked { background: #80baea; outline: 1px solid #000; outline-offset: -1px; box-shadow: inset 0 0 0 2px #fff; }
.vscroll { display: flex; flex-direction: column; align-items: center; padding: 6px 0; }
.vscroll i { width: 15px; flex: 1; margin: 107px 0 6px; background: #cdcdcd; }
.hscroll { display: flex; align-items: center; padding: 0 5px; }
.hscroll i { height: 15px; flex: 1; margin: 0 141px 0 6px; background: #cdcdcd; }
.dlg-foot { flex: none; display: flex; justify-content: flex-end; gap: 9px; padding: 10px 7px 2px; }
.dlg-foot button { width: 86px; height: 28px; background: #e1e1e1; border: 1px solid #adadad; }
.dlg-foot .default { border: 2px solid #0078d7; }
.watermark { position: absolute; right: 9px; bottom: 9px; font: 15px/20px "Noto Sans", sans-serif; color: #fffa; text-shadow: 0 0 2px #0006; pointer-events: none; white-space: nowrap; }
```
